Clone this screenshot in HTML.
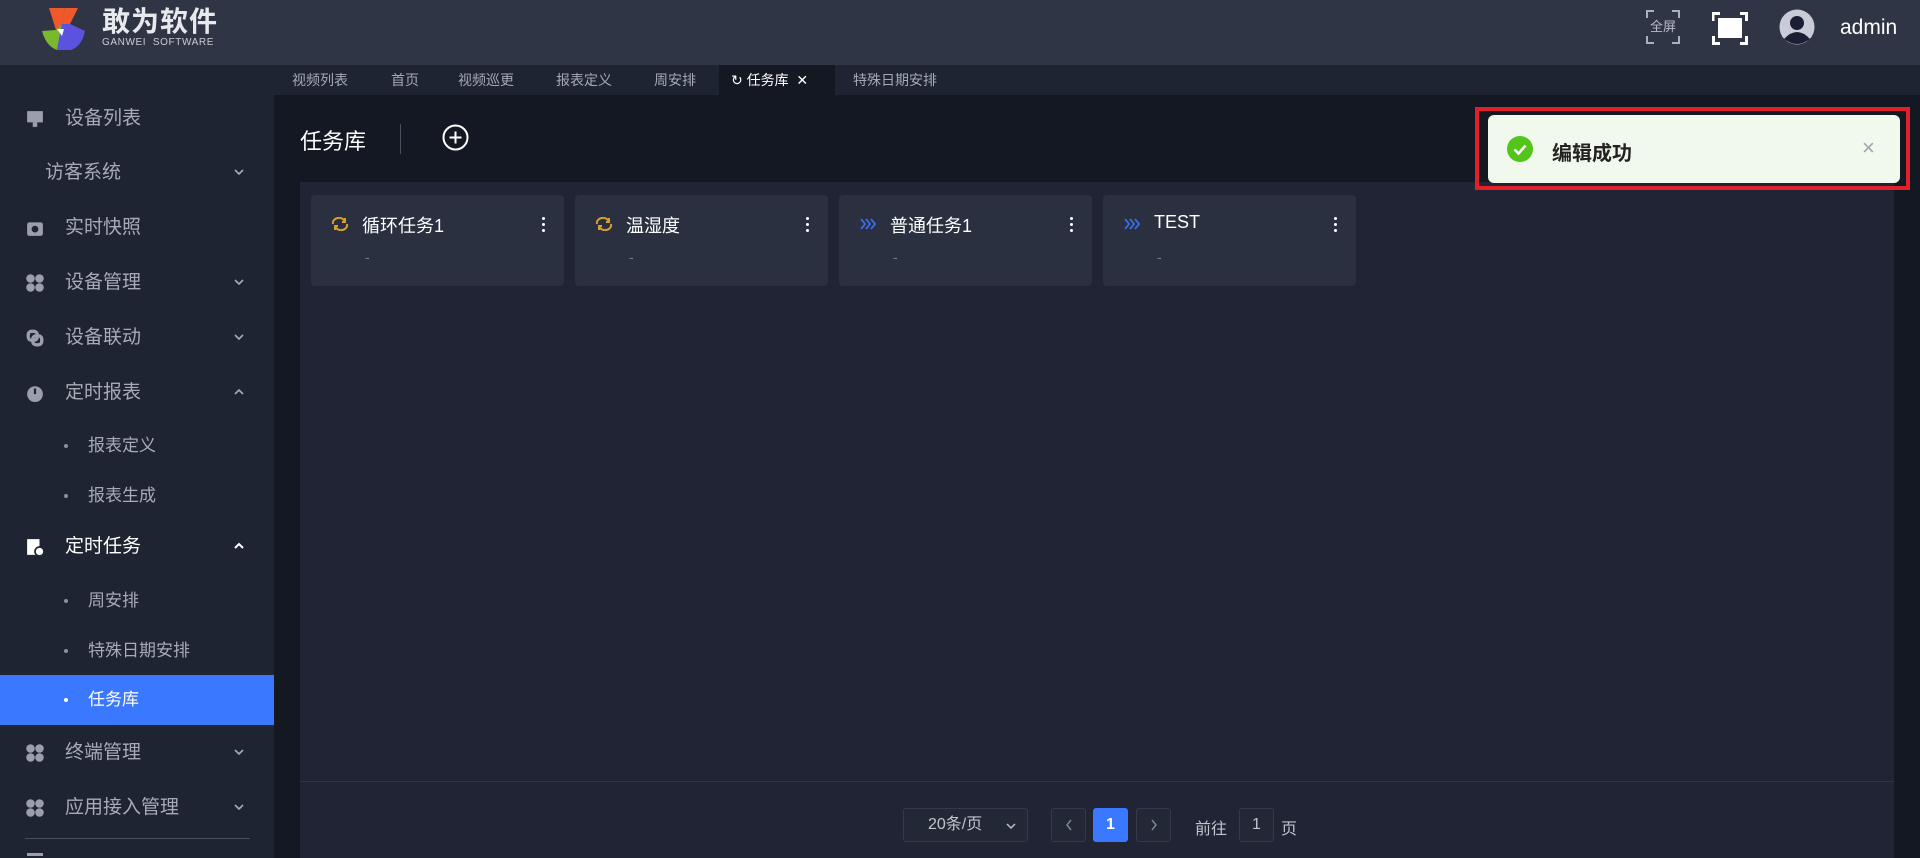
<!DOCTYPE html>
<html><head><meta charset="utf-8">
<style>
*{margin:0;padding:0;box-sizing:border-box}
body{width:1920px;height:858px;overflow:hidden;background:#141823;font-family:"Liberation Sans","Noto Sans CJK SC",sans-serif;position:relative}
.hdr{position:absolute;left:0;top:0;width:1920px;height:65px;background:#303546}
.side{position:absolute;left:0;top:65px;width:274px;height:793px;background:#1f2433}
.tabs{position:absolute;left:274px;top:65px;width:1646px;height:30px;background:#1f2433}
.tab{position:absolute;top:0;height:30px;line-height:30px;font-size:14px;color:#a4a9b5}
.mi{position:absolute;left:0;width:274px;font-size:19px;color:#a6abb6;height:40px;line-height:40px}
.mi .t{position:absolute;left:65px}
.mi .ic{position:absolute;left:26px;top:11px;width:18px;height:18px}
.mi .ar{position:absolute;left:233px;top:15px;width:12px;height:8px}
.sub{position:absolute;left:0;width:274px;height:40px;line-height:40px;font-size:17px;color:#a6abb6}
.sub .d{position:absolute;left:64px;top:18px;width:4px;height:4px;background:#8c909a;border-radius:50%}
.sub .t{position:absolute;left:88px}
.panel{position:absolute;left:300px;top:182px;width:1594px;height:676px;background:#202434}
.card{position:absolute;top:195px;width:253px;height:91px;background:#2a3040;border-radius:4px}
.card .tt{position:absolute;left:51px;top:17px;font-size:18px;color:#fff}
.card .ds{position:absolute;left:54px;top:54px;font-size:14px;color:#777d8a}
.card .kb{position:absolute;left:231px;top:22px;width:4px}
.card .kb i{display:block;width:3px;height:3px;background:#fff;margin-bottom:3px;border-radius:50%}
.card svg{position:absolute;left:20px;top:22px}
.pg{position:absolute;top:808px;height:34px;border:1px solid #333a4c;border-radius:3px;background:#232837;color:#c0c4cc;font-size:16px;text-align:center;line-height:32px}
</style></head><body>
<div class="hdr">
 <svg style="position:absolute;left:40px;top:6px" width="48" height="46" viewBox="0 0 48 46">
  <path d="M9 2 L25 2 L22 18 L16 24 Z" fill="#f05a2a"/>
  <path d="M25 2 L38 2 L30 18 L22 18 Z" fill="#f05a2a"/>
  <path d="M2 25 L16 24 L22 18 L17 44 Q6 40 2 25Z" fill="#7ab82e"/>
  <path d="M22 18 L30 18 L45 25 Q42 40 31 44 L17 44Z" fill="#5b53e0"/>
  <path d="M17 23 L24 23 L22 30 Z" fill="#fff"/>
 </svg>
 <div style="position:absolute;left:102px;top:8px;font-size:28px;line-height:1;font-weight:bold;color:#e8e9ec;letter-spacing:1px">敢为软件</div>
 <div style="position:absolute;left:102px;top:38px;font-size:10px;line-height:1;color:#c9ccd3;letter-spacing:0.6px">GANWEI&nbsp; SOFTWARE</div>
 <svg style="position:absolute;left:1646px;top:10px" width="34" height="34" viewBox="0 0 34 34" fill="none" stroke="#a9aec0" stroke-width="2"><path d="M1 8V1H8M26 1H33V8M33 26V33H26M8 33H1V26"/></svg>
 <div style="position:absolute;left:1650px;top:16px;font-size:13px;color:#b8bcc8">全屏</div>
 <svg style="position:absolute;left:1712px;top:12px" width="36" height="33" viewBox="0 0 36 33" fill="none" stroke="#fff" stroke-width="3"><path d="M1 9V1.5H8M28 1.5H34.5V9M34.5 24V31.5H28M8 31.5H1.5V24"/><rect x="6" y="6" width="24" height="20" fill="#fff" stroke="none"/></svg>
 <svg style="position:absolute;left:1779px;top:9px" width="36" height="36" viewBox="0 0 36 36"><circle cx="18" cy="18" r="17.5" fill="#c9ccd8"/><circle cx="18" cy="14" r="7" fill="#1a1f33"/><path d="M5 30 Q18 16 31 30 Q18 40 5 30Z" fill="#1a1f33"/></svg>
 <div style="position:absolute;left:1840px;top:16px;font-size:21px;color:#fff">admin</div>
</div>
<div class="tabs">
 <div class="tab" style="left:18px">视频列表</div>
 <div class="tab" style="left:117px">首页</div>
 <div class="tab" style="left:184px">视频巡更</div>
 <div class="tab" style="left:282px">报表定义</div>
 <div class="tab" style="left:380px">周安排</div>
 <div style="position:absolute;left:445px;top:0;width:116px;height:30px;background:#141823"></div>
 <div class="tab" style="left:457px;color:#fff">↻ 任务库 &nbsp;✕</div>
 <div class="tab" style="left:579px">特殊日期安排</div>
</div>
<div class="side">
 <div class="mi" style="top:34px"><svg class="ic" viewBox="0 0 16 16"><rect x="1" y="1" width="14" height="10" fill="#9a9fab"/><rect x="6" y="11" width="4" height="4" fill="#9a9fab"/></svg><span class="t">设备列表</span></div>
 <div class="mi" style="top:88px"><span class="t" style="left:45px">访客系统</span><svg class="ar" viewBox="0 0 12 8" fill="none" stroke="#a6abb6" stroke-width="1.6"><path d="M2 2l4 4 4-4"/></svg></div>
 <div class="mi" style="top:143px"><svg class="ic" viewBox="0 0 16 16"><rect x="1" y="3" width="14" height="12" rx="2" fill="#9a9fab"/><circle cx="8" cy="9" r="3" fill="#1f2433"/></svg><span class="t">实时快照</span></div>
 <div class="mi" style="top:198px"><svg class="ic" viewBox="0 0 16 16" fill="#9a9fab"><circle cx="4" cy="4" r="3.8"/><circle cx="12" cy="4" r="3.8"/><circle cx="4" cy="12" r="3.8"/><circle cx="12" cy="12" r="3.8"/></svg><span class="t">设备管理</span><svg class="ar" viewBox="0 0 12 8" fill="none" stroke="#a6abb6" stroke-width="1.6"><path d="M2 2l4 4 4-4"/></svg></div>
 <div class="mi" style="top:253px"><svg class="ic" viewBox="0 0 16 16" fill="none" stroke="#9a9fab" stroke-width="3"><rect x="2" y="2" width="8" height="8" rx="3"/><rect x="6" y="6" width="8" height="8" rx="3"/></svg><span class="t">设备联动</span><svg class="ar" viewBox="0 0 12 8" fill="none" stroke="#a6abb6" stroke-width="1.6"><path d="M2 2l4 4 4-4"/></svg></div>
 <div class="mi" style="top:308px"><svg class="ic" viewBox="0 0 16 16"><circle cx="8" cy="9" r="7" fill="#9a9fab"/><rect x="7" y="4" width="2" height="5" fill="#1f2433"/></svg><span class="t">定时报表</span><svg class="ar" viewBox="0 0 12 8" fill="none" stroke="#a6abb6" stroke-width="1.6"><path d="M2 6l4-4 4 4"/></svg></div>
 <div class="sub" style="top:361px"><i class="d"></i><span class="t">报表定义</span></div>
 <div class="sub" style="top:411px"><i class="d"></i><span class="t">报表生成</span></div>
 <div class="mi" style="top:462px;color:#fff"><svg class="ic" viewBox="0 0 16 16"><rect x="1" y="1" width="11" height="14" fill="#fff"/><circle cx="12" cy="12" r="4" fill="#fff" stroke="#1f2433" stroke-width="1.5"/></svg><span class="t">定时任务</span><svg class="ar" viewBox="0 0 12 8" fill="none" stroke="#fff" stroke-width="2"><path d="M2 6l4-4 4 4"/></svg></div>
 <div class="sub" style="top:516px"><i class="d"></i><span class="t">周安排</span></div>
 <div class="sub" style="top:566px"><i class="d"></i><span class="t">特殊日期安排</span></div>
 <div class="sub" style="top:610px;height:50px;line-height:50px;background:#3a78ff;color:#fff"><i class="d" style="top:23px;background:#fff"></i><span class="t">任务库</span></div>
 <div class="mi" style="top:668px"><svg class="ic" viewBox="0 0 16 16" fill="#9a9fab"><circle cx="4" cy="4" r="3.8"/><circle cx="12" cy="4" r="3.8"/><circle cx="4" cy="12" r="3.8"/><circle cx="12" cy="12" r="3.8"/></svg><span class="t">终端管理</span><svg class="ar" viewBox="0 0 12 8" fill="none" stroke="#a6abb6" stroke-width="1.6"><path d="M2 2l4 4 4-4"/></svg></div>
 <div class="mi" style="top:723px"><svg class="ic" viewBox="0 0 16 16" fill="#9a9fab"><circle cx="4" cy="4" r="3.8"/><circle cx="12" cy="4" r="3.8"/><circle cx="4" cy="12" r="3.8"/><circle cx="12" cy="12" r="3.8"/></svg><span class="t">应用接入管理</span><svg class="ar" viewBox="0 0 12 8" fill="none" stroke="#a6abb6" stroke-width="1.6"><path d="M2 2l4 4 4-4"/></svg></div>
 <div style="position:absolute;left:25px;top:773px;width:225px;height:1px;background:#4a4f5e"></div>
 <div style="position:absolute;left:27px;top:788px;width:16px;height:3px;background:#9a9fab"></div>
</div>
<div style="position:absolute;left:300px;top:124px;font-size:22px;color:#fff">任务库</div>
<div style="position:absolute;left:400px;top:124px;width:1px;height:30px;background:#4a4f5e"></div>
<svg style="position:absolute;left:442px;top:124px" width="27" height="27" viewBox="0 0 27 27" fill="none" stroke="#fff" stroke-width="2"><circle cx="13.5" cy="13.5" r="12"/><path d="M13.5 7.5v12M7.5 13.5h12"/></svg>
<div class="panel"><div style="position:absolute;left:0;top:599px;width:1594px;height:1px;background:#2f3546"></div></div>
<div class="card" style="left:311px"><svg width="18" height="14" viewBox="0 0 18 14" fill="none" stroke="#d9a227" stroke-width="2"><path d="M2 7a6 5 0 0 1 12-2M16 7a6 5 0 0 1-12 2"/><path d="M14 1v4h-3M4 13V9h3"/></svg><div class="tt">循环任务1</div><div class="ds">-</div><div class="kb"><i></i><i></i><i></i></div></div>
<div class="card" style="left:575px"><svg width="18" height="14" viewBox="0 0 18 14" fill="none" stroke="#d9a227" stroke-width="2"><path d="M2 7a6 5 0 0 1 12-2M16 7a6 5 0 0 1-12 2"/><path d="M14 1v4h-3M4 13V9h3"/></svg><div class="tt">温湿度</div><div class="ds">-</div><div class="kb"><i></i><i></i><i></i></div></div>
<div class="card" style="left:839px"><svg width="18" height="14" viewBox="0 0 18 14" fill="none" stroke="#3a6df0" stroke-width="1.8"><path d="M2 2l4 5-4 5M7 2l4 5-4 5M12 2l4 5-4 5"/></svg><div class="tt">普通任务1</div><div class="ds">-</div><div class="kb"><i></i><i></i><i></i></div></div>
<div class="card" style="left:1103px"><svg width="18" height="14" viewBox="0 0 18 14" fill="none" stroke="#3a6df0" stroke-width="1.8"><path d="M2 2l4 5-4 5M7 2l4 5-4 5M12 2l4 5-4 5"/></svg><div class="tt">TEST</div><div class="ds">-</div><div class="kb"><i></i><i></i><i></i></div></div>
<div class="pg" style="left:903px;width:125px;text-align:left;padding-left:24px">20条/页<svg style="position:absolute;right:10px;top:13px" width="12" height="8" viewBox="0 0 12 8" fill="none" stroke="#c0c4cc" stroke-width="1.5"><path d="M2 2l4 4 4-4"/></svg></div>
<div class="pg" style="left:1051px;width:35px"><svg style="margin-top:10px" width="8" height="12" viewBox="0 0 8 12" fill="none" stroke="#7f8594" stroke-width="1.5"><path d="M6 1L2 6l4 5"/></svg></div>
<div class="pg" style="left:1093px;width:35px;background:#3a78ff;border-color:#3a78ff;color:#fff;font-weight:bold">1</div>
<div class="pg" style="left:1136px;width:35px"><svg style="margin-top:10px" width="8" height="12" viewBox="0 0 8 12" fill="none" stroke="#7f8594" stroke-width="1.5"><path d="M2 1l4 5-4 5"/></svg></div>
<div style="position:absolute;left:1195px;top:815px;font-size:16px;color:#c0c4cc">前往</div>
<div class="pg" style="left:1239px;width:35px">1</div>
<div style="position:absolute;left:1281px;top:815px;font-size:16px;color:#c0c4cc">页</div>
<div style="position:absolute;left:1475px;top:107px;width:435px;height:83px;border:4px solid #e2202a"></div>
<div style="position:absolute;left:1488px;top:115px;width:412px;height:68px;background:#f0f9eb;border-radius:6px">
 <svg style="position:absolute;left:19px;top:21px" width="26" height="26" viewBox="0 0 26 26"><circle cx="13" cy="13" r="13" fill="#52c41a"/><path d="M7.5 13.5l4 4 7-8" fill="none" stroke="#fff" stroke-width="2.5"/></svg>
 <div style="position:absolute;left:64px;top:22px;font-size:20px;font-weight:bold;color:#222">编辑成功</div>
 <div style="position:absolute;left:374px;top:20px;font-size:22px;color:#a0a4ab">×</div>
</div>
</body></html>
